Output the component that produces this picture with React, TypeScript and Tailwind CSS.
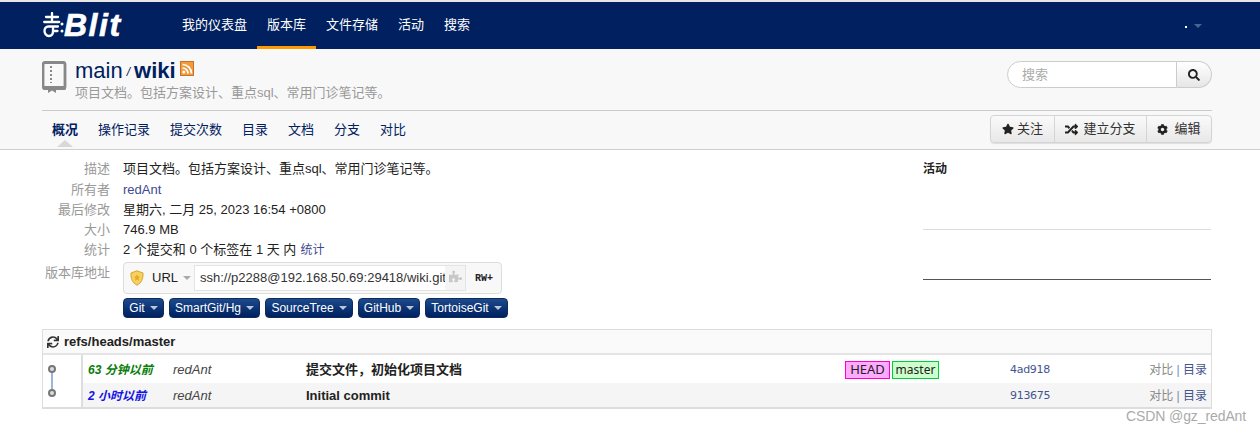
import React from "react";
import { FaSearch, FaStar, FaRandom, FaCog, FaSync, FaPuzzlePiece } from "react-icons/fa";

const FONT = { fontFamily: '"Liberation Sans", "Noto Sans CJK SC", sans-serif' };
const tabs = ["操作记录", "提交次数", "目录", "文档", "分支", "对比"];
const nav = [
  ["我的仪表盘", false],
  ["版本库", true],
  ["文件存储", false],
  ["活动", false],
  ["搜索", false],
] as const;

function Caret({ cls }: { cls: string }) {
  return <span className={`inline-block w-0 h-0 border-x-[4px] border-x-transparent border-t-[4px] ${cls}`} />;
}

function Row({ label, children, cls = "" }: { label: string; children: React.ReactNode; cls?: string }) {
  return (
    <div className={`flex h-5 leading-5 ${cls}`}>
      <div className="w-[68px] text-right text-[#999] shrink-0">{label}</div>
      <div className="ml-[13px] text-[#222] flex items-center whitespace-nowrap">{children}</div>
    </div>
  );
}

function BlueBtn({ t, w }: { t: string; w: string }) {
  return (
    <div className={`${w} h-5 rounded-[4px] bg-gradient-to-b from-[#1d4a8c] to-[#002060] text-white text-[12px] flex items-center justify-center gap-[5px] border border-[#0f2a5c]`}>
      {t}
      <Caret cls="border-t-[#bcc6d8]" />
    </div>
  );
}

export default function App() {
  return (
    <div className="w-[1260px] h-[432px] bg-white overflow-hidden relative text-[13px]" style={FONT}>
      <div className="h-[2px] bg-[#e8e8e8]" />
      {/* nav */}
      <div className="h-[47px] bg-[#00205f] flex items-stretch pl-[43px] pr-[58px]">
        <div className="w-[129px] flex items-center text-white">
          <svg width="21" height="26" viewBox="0 0 21 26" className="shrink-0 -mt-[1px]">
            <g fill="none" stroke="#fff" strokeWidth="2.300" strokeLinecap="round">
              <path d="M9 1v8.500M3 5h12M1.200 10h15" />
              <path d="M11 14.500H5.500C2.500 14.500 1.500 17 1.500 19s1.500 5 4.500 5 4-2 4-5v-4.500h5M10 19h4.500" />
            </g>
            <circle cx="19" cy="12" r="1.500" fill="#fff" />
            <circle cx="19" cy="19" r="1.500" fill="#fff" />
          </svg>
          <span className="text-[32px] font-bold italic leading-none tracking-[1.500px] -mt-[1px] [-webkit-text-stroke:0.6px_white]">Blit</span>
        </div>
        <div className="flex items-stretch text-[13px] text-white">
          {nav.map(([t, active]) => (
            <div
              key={t}
              className={`px-[10px] flex items-center pt-[1px] border-b-[3px] ${active ? "border-[#ff9900]" : "border-transparent"}`}
            >
              {t}
            </div>
          ))}
        </div>
        <div className="ml-auto flex items-center gap-[7px] text-white pt-[1px]">
          <span className="w-[2px] h-[2px] bg-white mt-[2px]" />
          <Caret cls="border-t-[#4a6396]" />
        </div>
      </div>

      {/* sub header */}
      <div className="h-[101px] bg-[#f8f8f8] border-b border-[#cfcfcf] px-[42px]">
        <div className="h-[62px] border-b border-[#cccccc] flex justify-between w-[1170px]">
          <div className="flex pt-[12px]">
            <svg width="25" height="32" viewBox="0 0 25 32" className="shrink-0">
              <path d="M3 1.500h18a2 2 0 0 1 2 2v22a2 2 0 0 1-2 2H3a2 2 0 0 1-2-2v-22a2 2 0 0 1 2-2z" fill="#f8f8f8" stroke="#888" strokeWidth="2.800" />
              <path d="M1 25h23v2.500a1.500 1.500 0 0 1-1.500 1.500h-21A1.500 1.500 0 0 1 1 27.500z" fill="#888" />
              <path d="M9 5v17" stroke="#888" strokeWidth="2" strokeDasharray="2 2" />
              <path d="M6 26h8v6l-4-2.500-4 2.500z" fill="#888" />
            </svg>
            <div className="ml-[8px]">
              <div className="flex items-center h-[24px] -mt-[3px] whitespace-nowrap text-[#002060]">
                <span className="text-[22px]">main</span>
                <span className="text-[12px] italic mx-[4px] mt-[4px]">/</span>
                <span className="text-[22px] font-bold">wiki</span>
                <svg width="14" height="15" viewBox="0 0 14 15" className="ml-[4px] -mt-[3px]">
                  <rect x="0.500" y="0.500" width="13" height="14" fill="#f29a3c" stroke="#c9722a" />
                  <circle cx="3.800" cy="11" r="1.500" fill="#fff" />
                  <path d="M2.500 7a5.500 5.500 0 0 1 5.500 5.500M2.500 3.500a9 9 0 0 1 9 9" fill="none" stroke="#fff" strokeWidth="1.700" />
                </svg>
              </div>
              <div className="text-[13px] leading-[16px] mt-[3px] text-[#999] whitespace-nowrap">项目文档。包括方案设计、重点sql、常用门诊笔记等。</div>
            </div>
          </div>
          <div className="flex pt-[12px] h-[40px]">
            <div className="w-[170px] h-[27px] bg-white border border-[#ccc] rounded-l-[14px] pl-[14px] text-[#aaa] text-[13px] flex items-center">搜索</div>
            <div className="w-[35px] h-[27px] bg-gradient-to-b from-white to-[#e6e6e6] border border-l-0 border-[#ccc] rounded-r-[14px] flex items-center justify-center">
              <FaSearch size={12} className="text-[#222]" />
            </div>
          </div>
        </div>
        <div className="flex justify-between w-[1170px] h-[38px] relative">
          <div className="flex items-center gap-[20px] pl-[10px] pb-[1px] text-[#002060]">
            <span className="font-bold relative">
              概况
              <span className="absolute left-[5px] top-[20px] w-0 h-0 border-x-[8px] border-x-transparent border-b-[7px] border-b-[#d8d8d8]" />
            </span>
            {tabs.map((t) => (
              <span key={t}>{t}</span>
            ))}
          </div>
          <div className="flex h-[28px] mt-[4px] w-[222px] rounded-[4px] border border-[#d4d4d4] bg-gradient-to-b from-[#fafafa] to-[#e8e8e8] text-[#333] shadow-[0_1px_1px_rgba(0,0,0,0.1)]">
            <div className="w-[64px] flex items-center justify-center gap-[3px] border-r border-[#d4d4d4]">
              <FaStar size={12} className="text-[#222]" />
              关注
            </div>
            <div className="w-[92px] flex items-center justify-center gap-[5px] border-r border-[#d4d4d4]">
              <FaRandom size={13} className="text-[#222]" />
              建立分支
            </div>
            <div className="flex-1 flex items-center justify-center gap-[6px]">
              <FaCog size={11} className="text-[#222]" />
              编辑
            </div>
          </div>
        </div>
      </div>

      {/* info */}
      <div className="flex pl-[42px] pt-[9px] h-[179px]">
        <div className="w-[881px]">
          <Row label="描述">项目文档。包括方案设计、重点sql、常用门诊笔记等。</Row>
          <Row label="所有者" cls="pt-[1px]"><span className="text-[#3d4a8f]">redAnt</span></Row>
          <Row label="最后修改" cls="pt-[1px]">星期六, 二月 25, 2023 16:54 +0800</Row>
          <Row label="大小" cls="pt-[1px]">746.9 MB</Row>
          <Row label="统计" cls="pt-[1px]">
            <span>2 个提交和 0 个标签在 1 天 内</span>
            <span className="text-[#3d4a8f] ml-[4px] text-[12px]">统计</span>
          </Row>
          <div className="flex mt-[3px]">
            <div className="w-[68px] pt-[1px] text-right text-[#999] shrink-0 whitespace-nowrap leading-5 flex justify-end">版本库地址</div>
            <div className="ml-[13px]">
              <div className="w-[379px] h-[32px] border border-[#ddd] rounded-[4px] bg-[#f8f8f8] flex items-center pl-[6px]">
                <svg width="14" height="16" viewBox="0 0 14 16" className="shrink-0">
                  <path d="M7 .8l6 2.200c.3 5.500-1.500 10-6 12.200C2.500 13 .7 8.500 1 3z" fill="#f6d061" stroke="#d9a32a" />
                  <path d="M7 4l1 2.500 2.300.2-1.800 1.600.6 2.500L7 9.500l-2.100 1.300.6-2.500-1.800-1.600L6 6.500z" fill="#e8a820" />
                </svg>
                <span className="ml-[8px] text-[#222]">URL</span>
                <Caret cls="ml-[5px] border-t-[#aaa]" />
                <div className="ml-[3px] w-[272px] h-[26px] bg-white border border-[#e4e4e4] flex items-center pl-[5px] text-[#333] whitespace-nowrap relative">
                  ssh://p2288@192.168.50.69:29418/wiki.git
                  <span className="absolute right-0 top-0 h-full w-[20px] bg-[#f4f4f4] flex items-start justify-center pt-[4px]">
                    <FaPuzzlePiece size={13} className="text-[#c8c8c8]" />
                  </span>
                </div>
                <span className="ml-[9px] text-[10px] font-bold text-[#222]" style={{ fontFamily: '"Liberation Mono", monospace' }}>RW+</span>
              </div>
              <div className="flex gap-[5px] mt-[4px]">
                <BlueBtn t="Git" w="w-[41px]" />
                <BlueBtn t="SmartGit/Hg" w="w-[91px]" />
                <BlueBtn t="SourceTree" w="w-[88px]" />
                <BlueBtn t="GitHub" w="w-[62px]" />
                <BlueBtn t="TortoiseGit" w="w-[83px]" />
              </div>
            </div>
          </div>
        </div>
        <div className="w-[288px] text-[#222]">
          <div className="font-bold text-[12px] leading-5">活动</div>
          <div className="h-[51px] border-b border-[#ddd]" />
          <div className="h-[50px] border-b border-[#555]" />
        </div>
      </div>

      {/* table */}
      <div className="mx-[42px] w-[1170px] border border-[#ddd] border-b-2">
        <div className="h-[25px] bg-[#fafafa] border-b-2 border-[#e4e4e4] flex items-center pl-[4px] gap-[5px] font-bold text-[13px] text-[#222]">
          <FaSync size={12} className="text-[#333]" />
          refs/heads/master
        </div>
        <div className="flex">
          <div className="w-[40px] h-[52px] border-r-2 border-[#ddd] shrink-0 pl-[3px]">
            <svg width="12" height="52" viewBox="0 0 12 52">
              <path d="M6 14v24" stroke="#9db4dc" strokeWidth="2" />
              <circle cx="6" cy="14" r="3" fill="#ddd" stroke="#777" strokeWidth="2" />
              <circle cx="6" cy="38" r="3" fill="#ddd" stroke="#777" strokeWidth="2" />
            </svg>
          </div>
          <div className="flex-1">
            <div className="h-[28px] pt-[2px] flex items-center whitespace-nowrap">
              <Commit time="63 分钟以前" color="text-[#0a7d0a]" msg="提交文件，初始化项目文档" hash="4ad918" labels />
            </div>
            <div className="h-[24px] pt-[1px] bg-[#f5f5f5] flex items-center whitespace-nowrap">
              <Commit time="2 小时以前" color="text-[#1414e6]" msg="Initial commit" hash="913675" />
            </div>
          </div>
        </div>
      </div>

      <div className="absolute left-[1126px] top-[406px] text-[14px] tracking-[-0.1px] text-[#aaa] whitespace-nowrap" style={{ fontFamily: '"Liberation Sans", sans-serif' }}>
        CSDN @gz_redAnt
      </div>
    </div>
  );
}

function Commit({ time, color, msg, hash, labels }: { time: string; color: string; msg: string; hash: string; labels?: boolean }) {
  return (
    <>
      <span className={`w-[90px] pl-[5px] font-bold italic text-[12px] ${color}`}>{time}</span>
      <span className="w-[133px] italic text-[#444] text-[13px]">redAnt</span>
      <span className="w-[539px] font-bold text-[#222] text-[13px]">{msg}</span>
      <span className="w-[165px] flex gap-[2px] text-[#222]">
        {labels && (
          <>
            <span className="w-[45px] h-[18px] border border-[#ff00cc] bg-[#ffaaff] flex items-center justify-center text-[13px]" style={{ fontFamily: '"Noto Sans", sans-serif' }}>HEAD</span>
            <span className="w-[47px] h-[18px] border border-[#00cc44] bg-[#ccffcc] flex items-center justify-center text-[12px]" style={{ fontFamily: '"Noto Sans", sans-serif' }}>master</span>
          </>
        )}
      </span>
      <span className="text-[11px] tracking-[-0.3px] text-[#44548f] pt-[1px]" style={{ fontFamily: '"DejaVu Sans", sans-serif' }}>{hash}</span>
      <span className="ml-auto pr-[4px] text-[12px] text-[#888]">
        对比 <span className="text-[#7a8db0]">|</span> <span className="text-[#44548f]">目录</span>
      </span>
    </>
  );
}
